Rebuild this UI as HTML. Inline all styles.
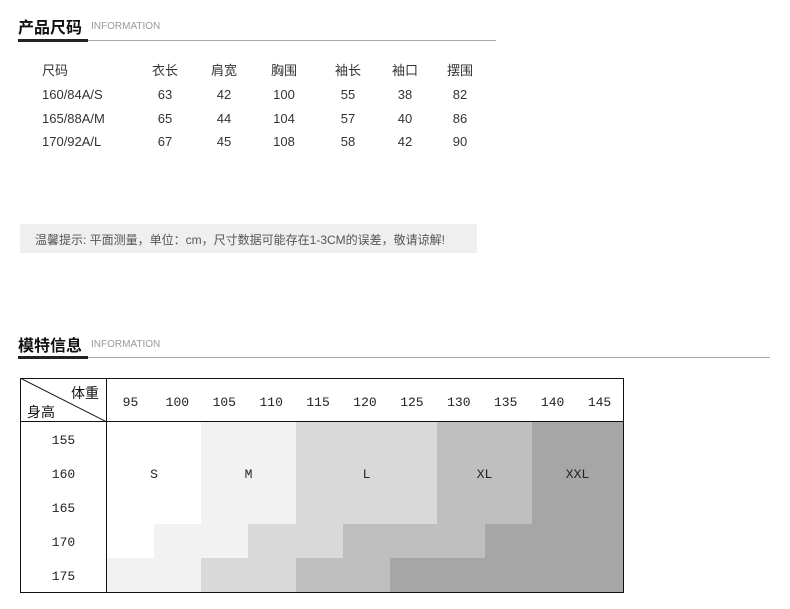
<!DOCTYPE html>
<html><head><meta charset="utf-8"><style>
*{margin:0;padding:0;box-sizing:border-box}
body{width:790px;height:609px;background:#fff;position:relative;overflow:hidden;font-family:"Liberation Sans","Noto Sans CJK SC",sans-serif;color:#333}
.a{position:absolute;white-space:nowrap}
.h{font-size:16px;font-weight:bold;color:#111}
.en{font-size:10px;color:#999}
.t{font-size:13px;color:#333}
.c{text-align:center;width:60px}
.m{font-family:"Liberation Mono","Noto Sans CJK SC",monospace;font-size:13px;color:#222}
.b{position:absolute}
</style></head><body>
<div class="a h" style="left:18px;top:14px">产品尺码</div>
<div class="a en" style="left:91px;top:21px">INFORMATION</div>
<div class="b" style="left:18px;top:40px;width:478px;height:1px;background:#aaa"></div>
<div class="b" style="left:18px;top:39px;width:70px;height:3px;background:#222"></div>

<div class="a t" style="left:42px;top:60px">尺码</div>
<div class="a t c" style="left:135px;top:60px">衣长</div>
<div class="a t c" style="left:194px;top:60px">肩宽</div>
<div class="a t c" style="left:254px;top:60px">胸围</div>
<div class="a t c" style="left:318px;top:60px">袖长</div>
<div class="a t c" style="left:375px;top:60px">袖口</div>
<div class="a t c" style="left:430px;top:60px">摆围</div>

<div class="a t" style="left:42px;top:87px">160/84A/S</div>
<div class="a t c" style="left:135px;top:87px">63</div><div class="a t c" style="left:194px;top:87px">42</div><div class="a t c" style="left:254px;top:87px">100</div><div class="a t c" style="left:318px;top:87px">55</div><div class="a t c" style="left:375px;top:87px">38</div><div class="a t c" style="left:430px;top:87px">82</div>
<div class="a t" style="left:42px;top:111px">165/88A/M</div>
<div class="a t c" style="left:135px;top:111px">65</div><div class="a t c" style="left:194px;top:111px">44</div><div class="a t c" style="left:254px;top:111px">104</div><div class="a t c" style="left:318px;top:111px">57</div><div class="a t c" style="left:375px;top:111px">40</div><div class="a t c" style="left:430px;top:111px">86</div>
<div class="a t" style="left:42px;top:134px">170/92A/L</div>
<div class="a t c" style="left:135px;top:134px">67</div><div class="a t c" style="left:194px;top:134px">45</div><div class="a t c" style="left:254px;top:134px">108</div><div class="a t c" style="left:318px;top:134px">58</div><div class="a t c" style="left:375px;top:134px">42</div><div class="a t c" style="left:430px;top:134px">90</div>

<div class="b" style="left:20px;top:224px;width:457px;height:29px;background:#efefef"></div>
<div class="a" style="left:35px;top:231px;font-size:12px;color:#555">温馨提示: 平面测量，单位：cm，尺寸数据可能存在1-3CM的误差，敬请谅解!</div>

<div class="a h" style="left:18px;top:332px">模特信息</div>
<div class="a en" style="left:91px;top:339px">INFORMATION</div>
<div class="b" style="left:18px;top:357px;width:752px;height:1px;background:#aaa"></div>
<div class="b" style="left:18px;top:356px;width:70px;height:3px;background:#222"></div>

<div class="b" style="left:201px;top:422px;width:95px;height:102px;background:#f2f2f2"></div>
<div class="b" style="left:296px;top:422px;width:141px;height:102px;background:#d9d9d9"></div>
<div class="b" style="left:437px;top:422px;width:95px;height:102px;background:#bfbfbf"></div>
<div class="b" style="left:532px;top:422px;width:91px;height:102px;background:#a6a6a6"></div>
<div class="b" style="left:154px;top:524px;width:94px;height:34px;background:#f2f2f2"></div>
<div class="b" style="left:248px;top:524px;width:95px;height:34px;background:#d9d9d9"></div>
<div class="b" style="left:343px;top:524px;width:142px;height:34px;background:#bfbfbf"></div>
<div class="b" style="left:485px;top:524px;width:138px;height:34px;background:#a6a6a6"></div>
<div class="b" style="left:107px;top:558px;width:94px;height:34px;background:#f2f2f2"></div>
<div class="b" style="left:201px;top:558px;width:95px;height:34px;background:#d9d9d9"></div>
<div class="b" style="left:296px;top:558px;width:94px;height:34px;background:#bfbfbf"></div>
<div class="b" style="left:390px;top:558px;width:233px;height:34px;background:#a6a6a6"></div>

<div class="b" style="left:20px;top:378px;width:604px;height:215px;border:1px solid #111"></div>
<div class="b" style="left:20px;top:421px;width:604px;height:1px;background:#111"></div>
<div class="b" style="left:106px;top:378px;width:1px;height:215px;background:#111"></div>
<svg class="b" style="left:20px;top:378px" width="87" height="44"><line x1="0" y1="0" x2="87" y2="44" stroke="#111" stroke-width="1"/></svg>
<div class="a" style="left:71px;top:383px;font-size:14px;color:#111;font-family:'Noto Sans CJK SC',sans-serif">体重</div>
<div class="a" style="left:27px;top:402px;font-size:14px;color:#111;font-family:'Noto Sans CJK SC',sans-serif">身高</div>

<div class="a m" style="left:107px;top:395px;width:516px;display:flex">
<span style="width:47px;text-align:center">95</span><span style="width:47px;text-align:center">100</span><span style="width:47px;text-align:center">105</span><span style="width:47px;text-align:center">110</span><span style="width:47px;text-align:center">115</span><span style="width:47px;text-align:center">120</span><span style="width:47px;text-align:center">125</span><span style="width:47px;text-align:center">130</span><span style="width:47px;text-align:center">135</span><span style="width:47px;text-align:center">140</span><span style="width:47px;text-align:center">145</span></div>
<div class="a m" style="left:20px;top:433px;width:87px;text-align:center">155</div>
<div class="a m" style="left:20px;top:467px;width:87px;text-align:center">160</div>
<div class="a m" style="left:20px;top:501px;width:87px;text-align:center">165</div>
<div class="a m" style="left:20px;top:535px;width:87px;text-align:center">170</div>
<div class="a m" style="left:20px;top:569px;width:87px;text-align:center">175</div>
<div class="a m" style="left:107px;top:467px;width:94px;text-align:center">S</div>
<div class="a m" style="left:201px;top:467px;width:95px;text-align:center">M</div>
<div class="a m" style="left:296px;top:467px;width:141px;text-align:center">L</div>
<div class="a m" style="left:437px;top:467px;width:95px;text-align:center">XL</div>
<div class="a m" style="left:532px;top:467px;width:91px;text-align:center">XXL</div>
</body></html>
